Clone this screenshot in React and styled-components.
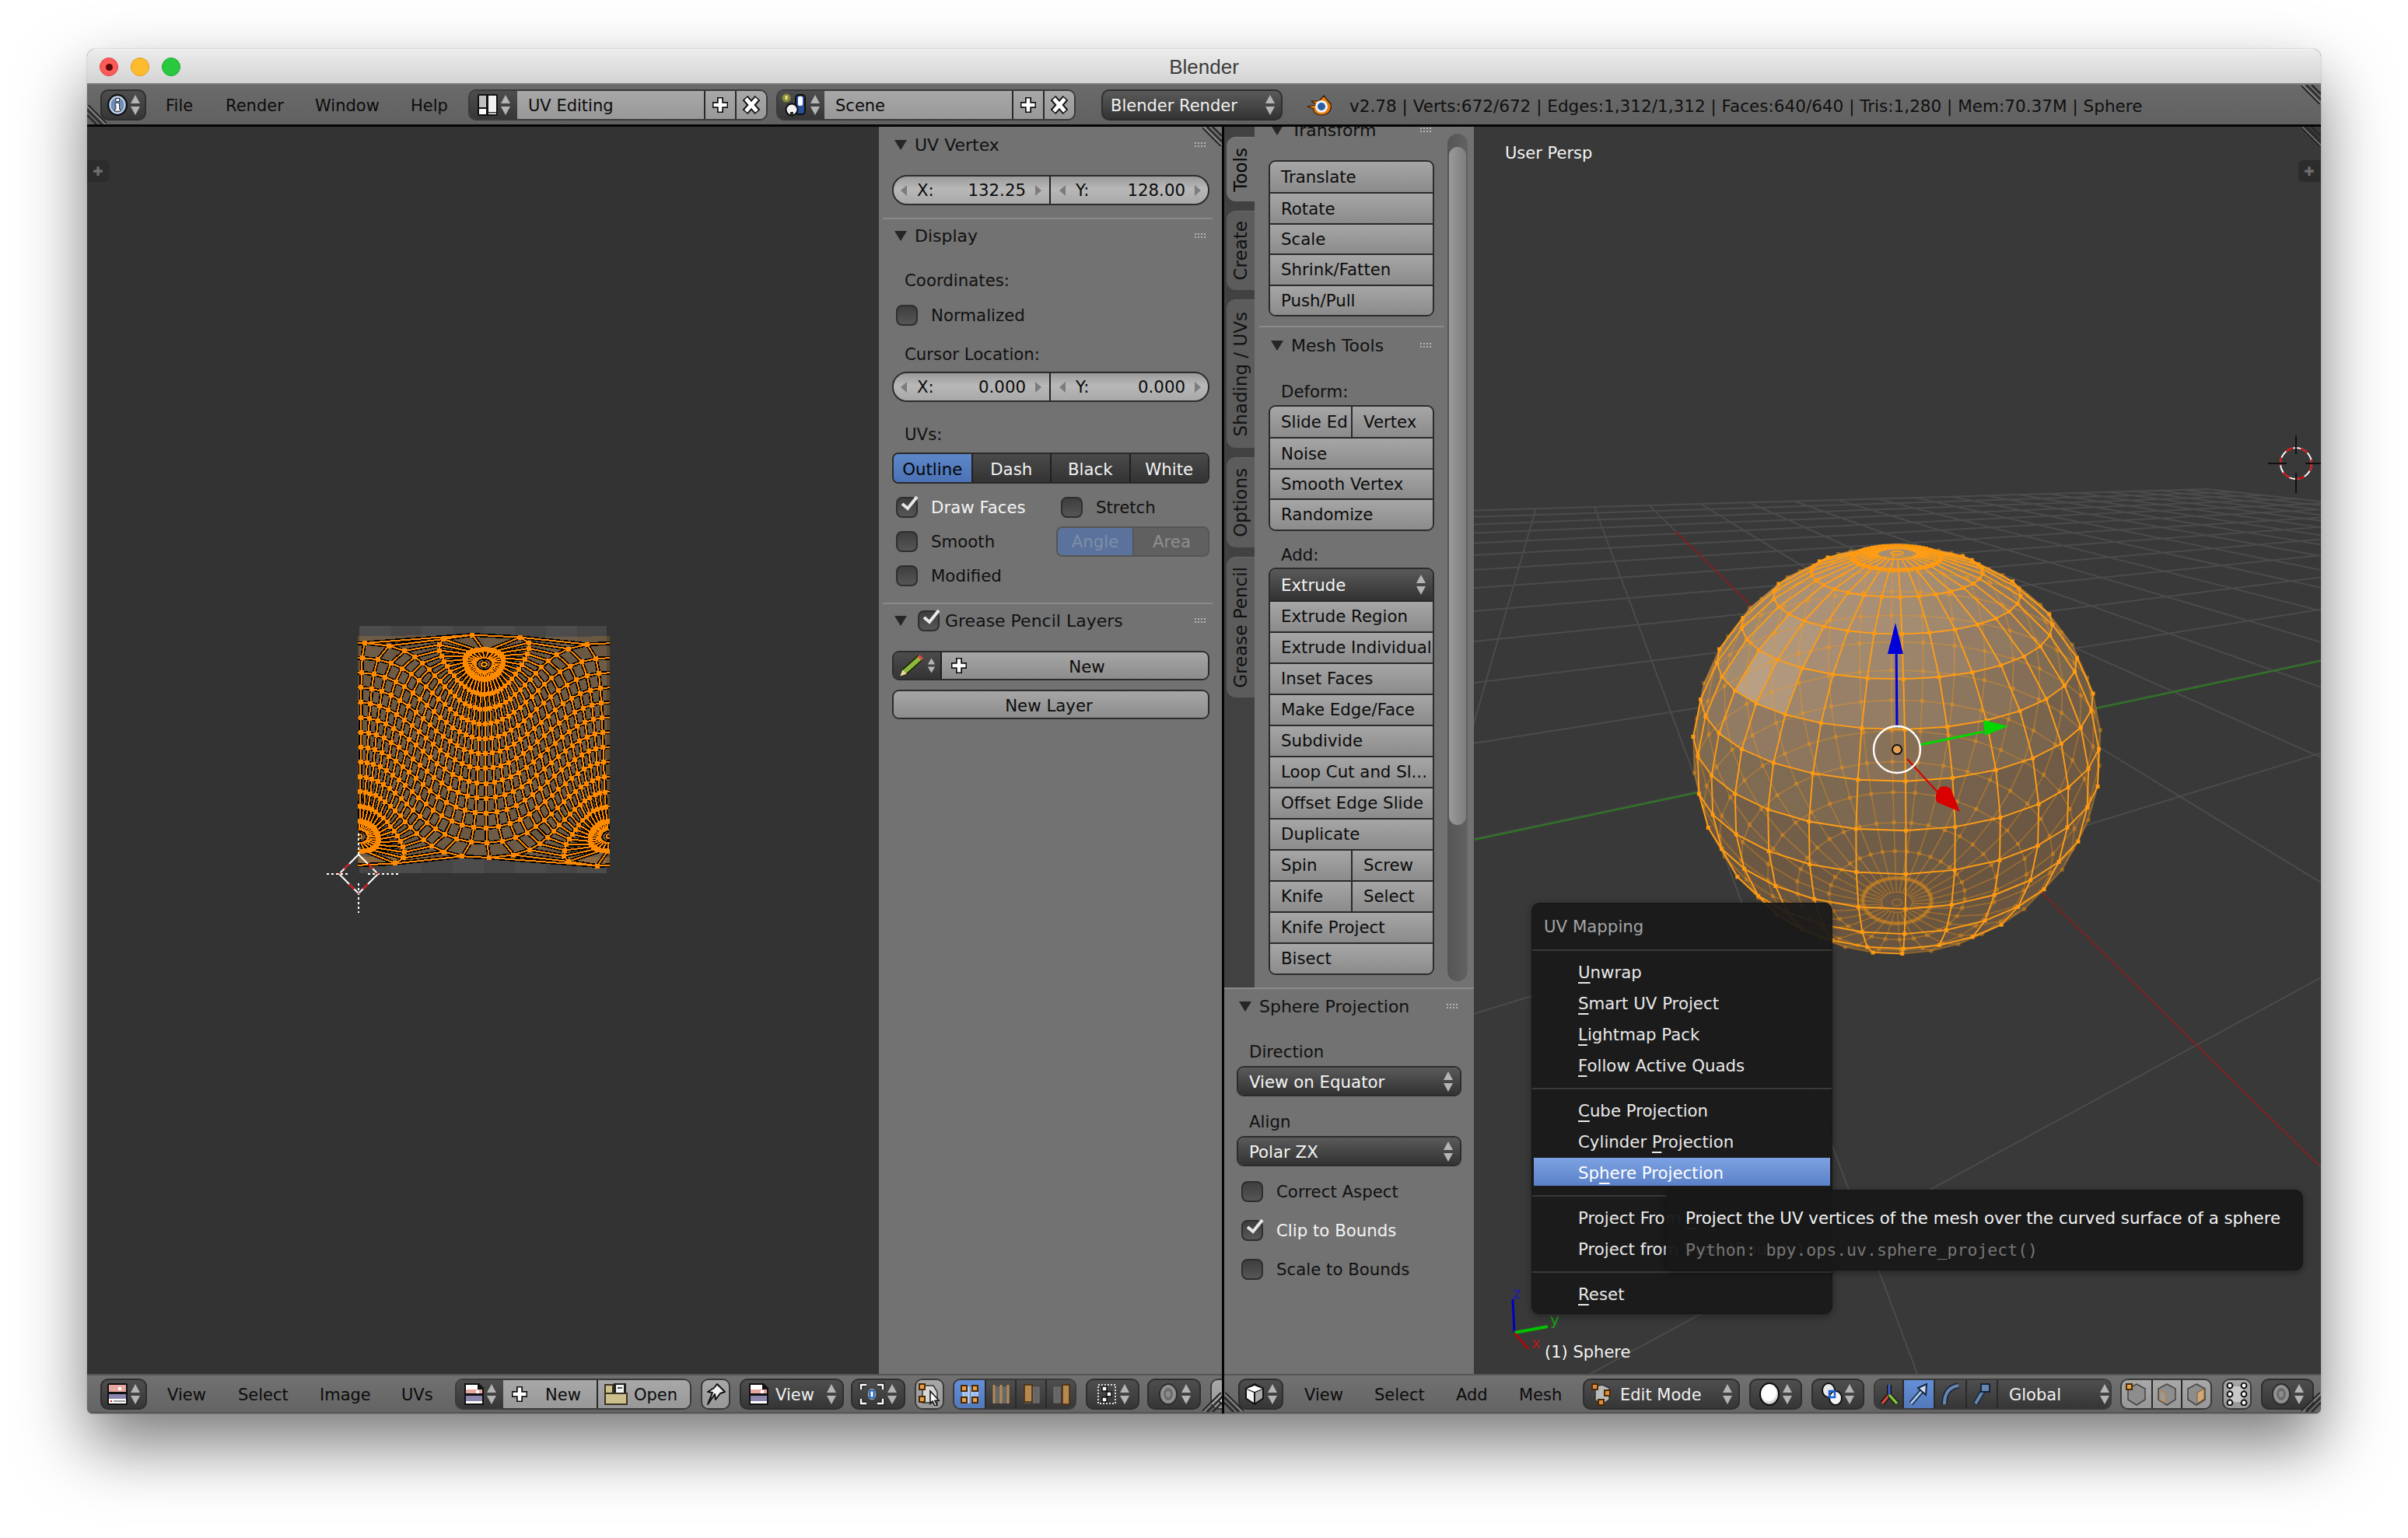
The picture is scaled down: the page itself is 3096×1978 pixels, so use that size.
import React from "react";
import styled, { createGlobalStyle } from "styled-components";

// ---- mesh and projection helpers for the two viewports ----

const rad = (d) => (d * Math.PI) / 180;
const unit = (colat, seg) => {
  const t = rad(colat);
  const p = (seg / 32) * Math.PI * 2 + rad(2);
  return [Math.sin(t) * Math.cos(p), Math.sin(t) * Math.sin(p), Math.cos(t)];
};

function buildMesh() {
  const faces = [];
  const edges = [];
  const verts = [];
  const rings = [];
  for (let k = 1; k <= 15; k++) rings.push(11.25 * k);
  rings.forEach((ring, r) => {
    for (let s = 0; s < 32; s++) {
      const a = unit(ring, s);
      const b = unit(ring, s + 1);
      verts.push(a);
      edges.push([a, b]);
      if (r < rings.length - 1) {
        const c = unit(rings[r + 1], s + 1);
        const d = unit(rings[r + 1], s);
        edges.push([a, d]);
        faces.push([a, b, c, d]);
      }
    }
  });
  // pole caps: dense outer ring, spokes that stop short, a tiny ring at the pole
  [
    [11.25, 5, 1.6],
    [168.75, 175, 178.4],
  ].forEach(([outer, inner, tiny]) => {
    const disc = [];
    for (let s = 0; s < 32; s++) {
      const i0 = unit(inner, s);
      const i1 = unit(inner, s + 1);
      const o0 = unit(outer, s);
      const o1 = unit(outer, s + 1);
      disc.push(i0);
      verts.push(unit(outer, s + 0.5));
      edges.push([i0, o0], [i0, i1], [unit(tiny, s), unit(tiny, s + 1)]);
      faces.push([i0, i1, o1, o0]);
    }
    faces.push(disc);
  });
  return { faces, edges, verts };
}

const mesh = buildMesh();

// 3D view camera
const TILT = rad(29.4);
const CAM = 3.92;
const view3 = ([fx, sx, up]) => {
  const z = up * Math.sin(TILT) + fx * Math.cos(TILT);
  const y = up * Math.cos(TILT) - fx * Math.sin(TILT);
  const f = CAM / (CAM - z);
  return { x: 2439 + 254 * sx * f, y: 964 - 254 * y * f, nx: sx, ny: y, nz: z };
};
const isFront = (p) => p.nz > 1 / CAM;

const lerp = (a, b, t) => a + (b - a) * t;
function faceColor(pts) {
  const n = pts.reduce(
    (acc, p) => [acc[0] + p.nx, acc[1] + p.ny, acc[2] + p.nz],
    [0, 0, 0]
  );
  const len = Math.hypot(n[0], n[1], n[2]);
  const d = Math.max(0, (n[0] * -0.2 + n[1] * 0.7 + n[2] * 0.68) / len);
  const h = Math.max(0, (n[0] * -0.53 + n[1] * 0.32 + n[2] * 0.78) / len);
  const t = Math.min(1, d * d * 0.75 + Math.pow(h, 60) * 0.5);
  return `rgb(${lerp(106, 200, t) | 0},${lerp(86, 172, t) | 0},${lerp(64, 142, t) | 0})`;
}

const sphereFaces = mesh.faces
  .map((f) => f.map(view3))
  .filter((pts) => pts.reduce((s, p) => s + p.nz, 0) / pts.length > 1 / CAM)
  .map((pts) => ({
    points: pts.map((p) => `${p.x.toFixed(1)},${p.y.toFixed(1)}`).join(" "),
    fill: faceColor(pts),
  }));

let frontEdges = "";
let backEdges = "";
mesh.edges.forEach(([a, b]) => {
  const p = view3(a);
  const q = view3(b);
  const seg = `M${p.x.toFixed(1)} ${p.y.toFixed(1)}L${q.x.toFixed(1)} ${q.y.toFixed(1)}`;
  if (isFront(p) && isFront(q)) frontEdges += seg;
  else backEdges += seg;
});
let frontVerts = "";
let backVerts = "";
mesh.verts.forEach((v) => {
  const p = view3(v);
  const sq = `M${(p.x - 2.5).toFixed(1)} ${(p.y - 2.5).toFixed(1)}h5v5h-5z`;
  if (isFront(p)) frontVerts += sq;
  else backVerts += sq;
});

// UV layout: sphere projection around an axis tilted from the mesh pole
const UV_TILT = rad(25);
const uvOf = ([x, y, z]) => {
  const x2 = x * Math.cos(UV_TILT) + z * Math.sin(UV_TILT);
  const z2 = -x * Math.sin(UV_TILT) + z * Math.cos(UV_TILT);
  return {
    u: 0.5 + Math.atan2(y, x2) / (Math.PI * 2),
    v: 0.5 + Math.asin(Math.max(-1, Math.min(1, z2))) / Math.PI,
  };
};
const uvX = (u) => 462 + u * 321;
const uvY = (v) => 1118 - v * 306;

let uvEdges = "";
let uvVerts = "";
const uvFaces = [];
mesh.edges.forEach(([a, b]) => {
  const p = uvOf(a);
  const q = uvOf(b);
  let qu = q.u;
  let pu = p.u;
  if (Math.abs(pu - qu) > 0.5) {
    if (pu < qu) pu += 1;
    else qu += 1;
    uvEdges += `M${uvX(pu - 1).toFixed(1)} ${uvY(p.v).toFixed(1)}L${uvX(qu - 1).toFixed(1)} ${uvY(q.v).toFixed(1)}`;
  }
  uvEdges += `M${uvX(pu).toFixed(1)} ${uvY(p.v).toFixed(1)}L${uvX(qu).toFixed(1)} ${uvY(q.v).toFixed(1)}`;
});
mesh.verts.forEach((v) => {
  const p = uvOf(v);
  uvVerts += `M${(uvX(p.u) - 3).toFixed(1)} ${(uvY(p.v) - 3).toFixed(1)}h6v6h-6z`;
});
mesh.faces.forEach((f) => {
  const pts = f.map(uvOf);
  const us = pts.map((p) => p.u);
  const wrap = Math.max(...us) - Math.min(...us) > 0.5;
  const str = (shift) =>
    pts
      .map((p) => {
        const u = wrap && p.u < 0.5 ? p.u + 1 : p.u;
        return `${uvX(u + shift).toFixed(1)},${uvY(p.v).toFixed(1)}`;
      })
      .join(" ");
  uvFaces.push(str(0));
  if (wrap) uvFaces.push(str(-1));
});

// floor grid, as a homography between the two vanishing points
const ORIGIN = [2439, 964];
const VP_RED = [2008, 539];
const VP_GREEN = [4216, 589];
const A = 0.236;
const B = 0.0623;
const floorPt = (u, v) => {
  const w = 1 + A * u + B * v;
  return [
    (ORIGIN[0] + A * u * VP_RED[0] + B * v * VP_GREEN[0]) / w,
    (ORIGIN[1] + A * u * VP_RED[1] + B * v * VP_GREEN[1]) / w,
  ];
};
let gridPath = "";
const U_MIN = -6;
const U_MAX = 12;
const V_MIN = -12;
const V_MAX = 32;
for (let u = U_MIN; u <= U_MAX; u += 1) {
  const lo = Math.max(V_MIN, (0.04 - 1 - A * u) / B);
  if (lo >= V_MAX) continue;
  const p = floorPt(u, lo);
  const q = floorPt(u, V_MAX);
  gridPath += `M${p[0].toFixed(1)} ${p[1].toFixed(1)}L${q[0].toFixed(1)} ${q[1].toFixed(1)}`;
}
for (let v = V_MIN; v <= V_MAX; v += 2) {
  const lo = Math.max(U_MIN, (0.04 - 1 - B * v) / A);
  if (lo >= U_MAX) continue;
  const p = floorPt(lo, v);
  const q = floorPt(U_MAX, v);
  gridPath += `M${p[0].toFixed(1)} ${p[1].toFixed(1)}L${q[0].toFixed(1)} ${q[1].toFixed(1)}`;
}

// ---- styles ----

const GlobalStyle = createGlobalStyle`
  html, body {
    margin: 0;
    background: #fff;
    width: 3096px;
    height: 1978px;
    overflow: hidden;
    font-family: "DejaVu Sans", sans-serif;
  }
`;

const Page = styled.div`
  width: 3096px;
  height: 1978px;
  padding: 63px 0 0 112px;
  box-sizing: border-box;
`;

const Window = styled.div`
  width: 2872px;
  height: 1755px;
  display: flex;
  flex-direction: column;
  overflow: hidden;
  border-radius: 10px 10px 7px 7px;
  box-shadow: 0 40px 85px rgba(0, 0, 0, 0.52), 0 0 2px rgba(0, 0, 0, 0.3);
  background: #666;
`;

const TitleBar = styled.div`
  height: 44px;
  flex: none;
  position: relative;
  display: flex;
  align-items: center;
  justify-content: center;
  padding-top: 2px;
  background: linear-gradient(#ececec, #d3d3d3);
  color: #3c3c3c;
  font: 26px "Liberation Sans", sans-serif;
  border-top: 1px solid #f6f6f6;
  box-sizing: border-box;
`;

const Lights = styled.div`
  position: absolute;
  left: 16px;
  top: 10px;
  display: flex;
  gap: 16px;
`;

const Light = styled.span`
  width: 24px;
  height: 24px;
  border-radius: 50%;
  background: ${(p) => p.$c};
  border: 1px solid ${(p) => p.$b};
  box-sizing: border-box;
  display: flex;
  align-items: center;
  justify-content: center;
`;

const LightDot = styled.span`
  width: 9px;
  height: 9px;
  border-radius: 50%;
  background: #5a0a08;
`;

const TopBar = styled.div`
  height: 56px;
  flex: none;
  display: flex;
  align-items: center;
  position: relative;
  padding: 0 0 0 17px;
  box-sizing: border-box;
  background: linear-gradient(#6a6a6a, #616161);
  border-top: 2px solid #7a7a7a;
  border-bottom: 3px solid #050505;
  font-size: 21px;
`;

const BottomBar = styled.div`
  height: 51px;
  flex: none;
  display: flex;
  align-items: center;
  position: relative;
  overflow: hidden;
  padding-left: ${(p) => p.$pad}px;
  box-sizing: border-box;
  background: linear-gradient(#717171, #646464);
  border-top: 2px solid #565656;
  border-bottom: 2px solid #555;
  font-size: 21px;
`;

const MenuLink = styled.span`
  flex: none;
  width: ${(p) => p.$w}px;
  margin-left: ${(p) => p.$ml || 0}px;
  padding-top: 3px;
  color: #0c0c0c;
`;

const Main = styled.div`
  flex: 1;
  min-height: 0;
  display: flex;
`;

const Side = styled.div`
  width: ${(p) => p.$w}px;
  flex: none;
  display: flex;
  flex-direction: column;
`;

const VDivider = styled.div`
  width: 3px;
  flex: none;
  background: #050505;
`;

const Views = styled.div`
  flex: 1;
  min-height: 0;
  display: flex;
`;

const Viewport = styled.div`
  flex: 1;
  min-width: 0;
  position: relative;
  overflow: hidden;
  background: ${(p) => p.$bg};
`;

const Canvas = styled.svg`
  position: absolute;
  left: 0;
  top: 0;
  width: 100%;
  height: 100%;
`;

const AddTab = styled.div`
  position: absolute;
  top: 43px;
  ${(p) => (p.$right ? "right: 1px;" : "left: 0;")}
  width: 28px;
  height: 28px;
  border-radius: ${(p) => (p.$right ? "6px 0 0 6px" : "0 6px 6px 0")};
  background: #2c2c2c;
  display: flex;
  align-items: center;
  justify-content: center;
  color: #6f6f6f;
`;

const ViewLabel = styled.div`
  position: absolute;
  left: ${(p) => p.$x}px;
  top: ${(p) => p.$y}px;
  color: #f2f2f2;
  font-size: 21px;
  line-height: 28px;
`;

const AxisLabel = styled.div`
  position: absolute;
  left: ${(p) => p.$x}px;
  top: ${(p) => p.$y}px;
  color: ${(p) => p.$c};
  font-size: 20px;
  line-height: 24px;
`;

const CornerMark = styled.svg`
  position: absolute;
  width: 25px;
  height: 25px;
  ${(p) =>
    p.$at === "tr"
      ? "top: 0; right: 0;"
      : p.$at === "bl"
      ? "bottom: 0; left: 0; transform: rotate(180deg);"
      : "bottom: 0; right: 0; transform: scaleY(-1);"}
`;

const ToolBox = styled.div`
  width: 321px;
  flex: none;
  display: flex;
  flex-direction: column;
`;

const ToolRegion = styled.div`
  height: 1107px;
  flex: none;
  display: flex;
  overflow: hidden;
  background: #727272;
`;

const TabColumn = styled.div`
  width: 39px;
  flex: none;
  padding: 13px 0 0 3px;
  box-sizing: border-box;
  background: #414141;
  display: flex;
  flex-direction: column;
  gap: 12px;
`;

const Tab = styled.div`
  width: 36px;
  height: ${(p) => p.$h}px;
  flex: none;
  border-radius: 12px 0 0 12px;
  background: ${(p) => (p.$active ? "#727272" : "#5c5c5c")};
  border-top: 1px solid ${(p) => (p.$active ? "#808080" : "#666")};
  box-sizing: border-box;
  display: flex;
  align-items: center;
  justify-content: center;
  color: ${(p) => (p.$active ? "#050505" : "#111")};
`;

const TabText = styled.span`
  writing-mode: vertical-rl;
  transform: rotate(180deg);
  font-size: 23px;
  line-height: 30px;
  white-space: nowrap;
`;

const ToolScroll = styled.div`
  width: 213px;
  margin: -16px 0 0 18px;
  flex: none;
`;

const Scrollbar = styled.div`
  width: 26px;
  height: 1090px;
  margin: 9px 0 0 17px;
  padding: 17px 2px 0;
  box-sizing: border-box;
  flex: none;
  border-radius: 13px;
  background: linear-gradient(90deg, #555, #626262);
`;

const Thumb = styled.div`
  height: 872px;
  border-radius: 11px;
  background: linear-gradient(90deg, #9a9a9a, #7e7e7e);
`;

const Panel = styled.div`
  flex: 1;
  min-height: 0;
  background: #727272;
  padding: 0 ${(p) => p.$r}px 0 ${(p) => p.$l}px;
  box-sizing: border-box;
  position: relative;
`;

const PanelHead = styled.div`
  height: 40px;
  margin-top: ${(p) => p.$mt || 0}px;
  display: flex;
  align-items: center;
  color: #111;
  font-size: 22px;
  padding-left: ${(p) => p.$indent}px;
  padding-right: ${(p) => p.$gr}px;
`;

const Tri = styled.span`
  width: 0;
  height: 0;
  flex: none;
  border-left: 8px solid transparent;
  border-right: 8px solid transparent;
  border-top: 13px solid #262626;
  margin-right: ${(p) => p.$mr}px;
`;

const Grip = styled.span`
  width: 15px;
  height: 9px;
  margin-left: auto;
  flex: none;
  background-image: radial-gradient(#b4b4b4 1px, transparent 1.2px);
  background-size: 4px 4px;
`;

const PanelRule = styled.div`
  height: 2px;
  margin: ${(p) => p.$mt}px ${(p) => p.$mr || 0}px 0 ${(p) => p.$ml || 0}px;
  background: #8a8a8a;
`;

const Caption = styled.div`
  height: 28px;
  line-height: 28px;
  margin-top: ${(p) => p.$mt}px;
  padding-left: ${(p) => p.$pad}px;
  font-size: 21.3px;
  color: #111;
`;

const FieldRow = styled.div`
  height: 39px;
  margin-top: ${(p) => p.$mt}px;
  display: flex;
  box-sizing: border-box;
  border: 2px solid #2c2c2c;
  border-radius: 19px;
  overflow: hidden;
  background: linear-gradient(#9a9a9a, #b8b8b8 45%, #a8a8a8);
  font-size: 21.3px;
  color: #0c0c0c;
`;

const NumCell = styled.div`
  width: ${(p) => p.$w}px;
  flex: none;
  display: flex;
  align-items: center;
  padding: 0 ${(p) => p.$rp}px 0 ${(p) => p.$lp}px;
  box-sizing: border-box;
  border-left: ${(p) => (p.$split ? "2px solid #222" : "none")};
`;

const Nudge = styled.span`
  width: 0;
  height: 0;
  flex: none;
  border-top: 7px solid transparent;
  border-bottom: 7px solid transparent;
  ${(p) =>
    p.$dir === "l"
      ? "border-right: 8px solid #7c7c7c; margin-right: 13px;"
      : "border-left: 8px solid #7c7c7c; margin-left: 12px;"}
`;

const CellValue = styled.span`
  margin-left: auto;
`;

const Radio = styled.div`
  height: 40px;
  margin-top: ${(p) => p.$mt}px;
  display: flex;
  box-sizing: border-box;
  border: 2px solid #2a2a2a;
  border-radius: 8px;
  overflow: hidden;
  font-size: 21.3px;
`;

const RadioCell = styled.div`
  flex: 1;
  display: flex;
  align-items: center;
  justify-content: center;
  padding-top: 2px;
  color: ${(p) => (p.$on ? "#050505" : "#f2f2f2")};
  background: ${(p) =>
    p.$on ? "linear-gradient(#5e87c9, #4a72b5)" : "linear-gradient(#4a4a4a, #333)"};
  border-left: ${(p) => (p.$first ? "none" : "2px solid #1f1f1f")};
`;

const CheckGrid = styled.div`
  margin-top: 8px;
  display: grid;
  grid-template-columns: 211px 197px;
  grid-auto-rows: 44px;
  align-items: center;
`;

const CheckRow = styled.div`
  height: ${(p) => p.$h || 44}px;
  margin-top: ${(p) => p.$mt || 0}px;
  display: flex;
  align-items: center;
  gap: 17px;
  padding-left: ${(p) => p.$pad}px;
  font-size: 21.3px;
  color: ${(p) => (p.$on ? "#f4f4f4" : "#111")};
`;

const Box = styled.span`
  width: 28px;
  height: 27px;
  flex: none;
  position: relative;
  box-sizing: border-box;
  border: 2px solid #2e2e2e;
  border-radius: 8px;
  margin-right: ${(p) => p.$mr || 0}px;
  background: linear-gradient(#3e3e3e, #565656);
`;

const Tick = styled.svg`
  position: absolute;
  left: 2px;
  top: -6px;
  width: 26px;
  height: 24px;
`;

const ModeSwitch = styled.div`
  height: 39px;
  display: flex;
  box-sizing: border-box;
  border: 2px solid #555;
  border-radius: 8px;
  overflow: hidden;
  font-size: 21.3px;
`;

const ModeCell = styled.div`
  width: ${(p) => p.$w}px;
  flex: none;
  display: flex;
  align-items: center;
  justify-content: center;
  color: ${(p) => (p.$on ? "#7f8ea8" : "#8f8f8f")};
  background: ${(p) => (p.$on ? "#5a729c" : "#606060")};
  border-left: ${(p) => (p.$on ? "none" : "2px solid #555")};
`;

const PencilRow = styled.div`
  height: 38px;
  margin-top: ${(p) => p.$mt}px;
  display: flex;
  box-sizing: border-box;
  border: 2px solid #2c2c2c;
  border-radius: 9px;
  overflow: hidden;
  font-size: 21.3px;
`;

const PencilPick = styled.div`
  width: 62px;
  flex: none;
  display: flex;
  align-items: center;
  gap: 3px;
  padding-left: 6px;
  box-sizing: border-box;
  background: linear-gradient(#4c4c4c, #343434);
  border-right: 2px solid #1f1f1f;
`;

const LightButton = styled.div`
  flex: 1;
  display: flex;
  align-items: center;
  padding-left: 9px;
  color: #0c0c0c;
  background: linear-gradient(#a6a6a6, #8c8c8c);
`;

const ButtonLabel = styled.span`
  flex: 1;
  text-align: center;
  padding-top: 2px;
  padding-right: ${(p) => p.$rp || 0}px;
`;

const StackGroup = styled.div`
  margin-top: ${(p) => p.$mt}px;
  border: 2px solid #2c2c2c;
  border-radius: 9px;
  overflow: hidden;
  font-size: 21.3px;
`;

const StackRow = styled.div`
  height: ${(p) => p.$h || 40}px;
  box-sizing: border-box;
  display: flex;
  color: #0c0c0c;
  border-top: ${(p) => (p.$first ? "none" : "2px solid #2a2a2a")};
  background: linear-gradient(#a6a6a6, #8b8b8b);
`;

const DarkRow = styled(StackRow)`
  color: #f4f4f4;
  background: linear-gradient(#5a5a5a, #323232);
  align-items: center;
  justify-content: space-between;
  padding: 0 8px 0 14px;
`;

const DarkText = styled.span`
  padding-top: 2px;
`;

const StackCell = styled.div`
  flex: ${(p) => (p.$w ? `none` : 1)};
  width: ${(p) => (p.$w ? `${p.$w}px` : "auto")};
  padding-left: 14px;
  display: flex;
  align-items: center;
  box-sizing: border-box;
  border-left: ${(p) => (p.$split ? "2px solid #2a2a2a" : "none")};
  white-space: nowrap;
  overflow: hidden;
`;

const Drop = styled.div`
  width: ${(p) => p.$w}px;
  height: 40px;
  margin-left: ${(p) => p.$ml || 0}px;
  flex: none;
  display: flex;
  align-items: center;
  justify-content: ${(p) => (p.$text ? "flex-start" : "center")};
  gap: ${(p) => (p.$text ? 0 : 2)}px;
  padding: 0 ${(p) => (p.$text ? 7 : 2)}px 0 ${(p) => (p.$text ? p.$text : 2)}px;
  box-sizing: border-box;
  border: 2px solid #2e2e2e;
  border-radius: 10px;
  background: ${(p) =>
    p.$tone === "menu" ? "linear-gradient(#5a5a5a, #333)" : "linear-gradient(#4e4e4e, #363636)"};
  color: #f0f0f0;
`;

const DropText = styled.span`
  flex: 1;
  padding-top: 3px;
  margin-left: ${(p) => p.$ml || 0}px;
`;

const Seg = styled.div`
  margin-left: ${(p) => p.$ml || 0}px;
  height: 40px;
  flex: none;
  display: flex;
  box-sizing: border-box;
  border: 2px solid #3a3a3a;
  border-radius: 10px;
  overflow: hidden;
`;

const SegCell = styled.div`
  width: ${(p) => p.$w}px;
  flex: none;
  display: flex;
  align-items: center;
  gap: ${(p) => (p.$gap === undefined ? 2 : p.$gap)}px;
  justify-content: ${(p) => (p.$text ? "flex-start" : "center")};
  padding-left: ${(p) => p.$text || 0}px;
  box-sizing: border-box;
  color: ${(p) => (p.$tone === "dark" ? "#f0f0f0" : "#0c0c0c")};
  border-left: ${(p) => (p.$first ? "none" : "2px solid #2a2a2a")};
  background: ${(p) =>
    p.$tone === "dark"
      ? "linear-gradient(#4e4e4e, #363636)"
      : p.$tone === "blue"
      ? "linear-gradient(#6490d8, #5378ba)"
      : "linear-gradient(#a8a8a8, #989898)"};
`;

const SegText = styled.span`
  padding-top: 3px;
  flex: ${(p) => (p.$grow ? 1 : "none")};
`;

const Info = styled.span`
  margin-left: 22px;
  padding-top: 3px;
  font-size: 21.55px;
  color: #101010;
  white-space: nowrap;
`;

const Overlay = styled.div`
  position: absolute;
  left: ${(p) => p.$x}px;
  top: ${(p) => p.$y}px;
  box-sizing: border-box;
  border-radius: 10px;
  border: 1px solid #161616;
  background: ${(p) => p.$bg};
  box-shadow: 0 3px 10px rgba(0, 0, 0, 0.35);
  font-size: 21.3px;
`;

const PopupMenu = styled(Overlay)`
  width: 387px;
  height: 529px;
  overflow: hidden;
  color: #e8e8e8;
`;

const MenuTitle = styled.div`
  height: 58px;
  padding-left: 15px;
  display: flex;
  align-items: center;
  color: #a4a4a4;
`;

const MenuRule = styled.div`
  height: 2px;
  margin: ${(p) => p.$mt || 8}px 0 8px;
  background: #3a3a3a;
`;

const MenuRow = styled.div`
  height: 40px;
  line-height: 39px;
  margin: 0 2px;
  padding-left: 57px;
  white-space: nowrap;
  color: ${(p) => (p.$on ? "#fff" : "#e8e8e8")};
  background: ${(p) =>
    p.$on ? "linear-gradient(#7da2e2, #5a80c8) no-repeat 0 0 / 100% 36px" : "none"};

  u {
    text-underline-offset: 5px;
    text-decoration-thickness: 2px;
  }
`;

const TipBox = styled(Overlay)`
  width: 819px;
  height: 104px;
  padding: 15px 0 0 24px;
  color: #f0f0f0;
  white-space: nowrap;
`;

const TipLine = styled.div`
  height: 41px;
  line-height: 41px;
`;

const TipCode = styled(TipLine)`
  font-family: "DejaVu Sans Mono", monospace;
  font-size: 21.5px;
  color: #767676;
`;

// ---- icons ----

const Svg = ({ w = 28, h = 30, vb = "0 0 28 30", children }) => (
  <svg width={w} height={h} viewBox={vb} style={{ flex: "none", display: "block" }}>
    {children}
  </svg>
);

const UpDown = () => (
  <Svg w={14} h={30} vb="0 0 14 30">
    <path d="M7 2L13 13H1z" fill="#b4b4b4" />
    <path d="M7 28L13 17H1z" fill="#b4b4b4" />
  </Svg>
);

const IconInfo = () => (
  <Svg>
    <ellipse cx="14" cy="15" rx="12" ry="13" fill="#6d8db8" stroke="#0c0c0c" strokeWidth="2" />
    <ellipse cx="14" cy="15" rx="9.5" ry="10.5" fill="none" stroke="#d5dfec" strokeWidth="1.5" />
    <rect x="12" y="6.5" width="4.5" height="4" fill="#fff" stroke="#111" strokeWidth=".8" />
    <path d="M11 12.5h5.5v8H18v2.5H10.5v-2.5h1.5v-5.5h-1z" fill="#fff" stroke="#111" strokeWidth=".8" />
  </Svg>
);

const IconLayout = () => (
  <Svg>
    <rect x="1" y="1" width="26" height="28" rx="2" fill="#111" />
    <rect x="3" y="3" width="9" height="15" fill="#bfbfbf" />
    <rect x="3" y="20" width="9" height="7" fill="#fafafa" />
    <rect x="15" y="3" width="10" height="24" fill="#f2f2f2" />
    <rect x="15" y="24" width="10" height="1.5" fill="#333" />
  </Svg>
);

const IconScene = () => (
  <Svg w={34} vb="0 0 34 30">
    <circle cx="6" cy="6" r="5.5" fill="#8b8b3a" />
    <rect x="4.5" y="3" width="3" height="5" fill="#e8e88a" />
    <rect x="18" y="2" width="12" height="25" rx="4" fill="#2a4f9c" stroke="#0c0c0c" strokeWidth="2" />
    <rect x="21" y="4" width="6" height="12" rx="2" fill="#fff" />
    <circle cx="13" cy="21" r="7.5" fill="#f2f2f2" stroke="#0c0c0c" strokeWidth="2" />
    <rect x="11" y="24" width="4" height="6" fill="#222" />
  </Svg>
);

const IconPlus = ({ c = "#fff" }) => (
  <Svg w={26} h={30} vb="0 0 26 30">
    <path d="M13 5v20M3 15h20" stroke="#111" strokeWidth="8" />
    <path d="M13 6.5v17M4.5 15h17" stroke={c} strokeWidth="4.5" />
  </Svg>
);

const IconClose = () => (
  <Svg w={26} h={30} vb="0 0 26 30">
    <path d="M5 6l16 18M21 6L5 24" stroke="#111" strokeWidth="9" />
    <path d="M6 7l14 16M20 7L6 23" stroke="#fff" strokeWidth="5" />
  </Svg>
);

const Picture = () => (
  <>
    <rect x="3" y="3" width="22" height="12" fill="#e7a7a0" />
    <rect x="15" y="6" width="4" height="4" fill="#fff" />
    <rect x="3" y="12" width="22" height="3" fill="#111" />
    <rect x="3" y="15" width="22" height="6" fill="#8a86ad" />
    <rect x="3" y="21" width="22" height="6" fill="#fff" />
  </>
);

const IconEditor = () => (
  <Svg>
    <rect x="1" y="1" width="26" height="28" rx="2" fill="#111" />
    <Picture />
    <rect x="5" y="23" width="2" height="2" fill="#e01010" />
    <rect x="9" y="23" width="15" height="2" fill="#999" />
  </Svg>
);

const IconImage = () => (
  <Svg>
    <path d="M2 1h19l6 6v22H2z" fill="#111" />
    <path d="M4 3h15v6h6v18H4z" fill="#fff" />
    <rect x="4" y="9" width="21" height="6" fill="#e7a7a0" />
    <rect x="17" y="10" width="4" height="4" fill="#fff" />
    <rect x="4" y="14" width="21" height="3" fill="#111" />
    <rect x="4" y="17" width="21" height="7" fill="#8a86ad" />
  </Svg>
);

const IconFolder = () => (
  <Svg w={34} vb="0 0 34 30">
    <rect x="2" y="2" width="12" height="26" fill="#3a3424" />
    <rect x="4" y="4" width="8" height="10" fill="#cdc08c" />
    <rect x="14" y="1" width="16" height="15" fill="#222" />
    <rect x="17" y="3" width="10" height="11" fill="#f2f2f2" />
    <rect x="19" y="6" width="6" height="2" fill="#555" />
    <rect x="2" y="13" width="30" height="16" fill="#3a3424" />
    <rect x="4" y="15" width="26" height="12" fill="#cdbf8b" />
  </Svg>
);

const IconPin = () => (
  <Svg>
    <path d="M16 2l10 10-6 2-6 8-1-7-9 13 6-15-6-1 8-5z" fill="#f0f0f0" stroke="#111" strokeWidth="2" strokeLinejoin="round" />
  </Svg>
);

const IconPivot = () => (
  <Svg w={34} vb="0 0 34 30">
    <path d="M3 9V3h7M24 3h7v6M31 21v6h-7M10 27H3v-6" fill="none" stroke="#111" strokeWidth="5" />
    <path d="M3 9V3h7M24 3h7v6M31 21v6h-7M10 27H3v-6" fill="none" stroke="#fff" strokeWidth="2.5" />
    <ellipse cx="17" cy="15" rx="6" ry="8" fill="#9a9a9a" stroke="#333" strokeWidth="1" />
    <rect x="14.5" y="10.5" width="5" height="9" fill="#fff" stroke="#1a62c8" strokeWidth="2" />
  </Svg>
);

const Handle = ({ x, y }) => <rect x={x} y={y} width="7" height="7" fill="#e8a24a" stroke="#4c2a06" strokeWidth="2" />;

const IconCursorSel = () => (
  <Svg>
    <path d="M5 4h14l5 8v14H5z" fill="#d6d6d6" stroke="#333" strokeWidth="1.5" />
    <Handle x={1} y={2} />
    <Handle x={1} y={18} />
    <path d="M15 11l11 12-5 .5 3 5.5-3 1-3-6-3 3z" fill="#fff" stroke="#111" strokeWidth="1.6" />
  </Svg>
);

const IconUvMode = ({ kind }) => {
  const frame = kind === "vert" ? "#dfe8f5" : "#777";
  return (
    <Svg>
      <rect x="5" y="6" width="8" height="20" fill={kind === "vert" ? "#9cc0ea" : "#666"} stroke={frame} strokeWidth="1" />
      <rect x="16" y="6" width="8" height="20" fill={kind === "island" ? "#c49a62" : kind === "vert" ? "#9cc0ea" : "#666"} stroke={frame} strokeWidth="1" />
      {kind === "face" && <rect x="5" y="3" width="10" height="22" fill="#b58a52" stroke="#4c2a06" strokeWidth="1.5" />}
      {kind === "island" && <rect x="16" y="3" width="9" height="25" fill="#b58a52" stroke="#4c2a06" strokeWidth="1.5" />}
      {kind === "edge" && <path d="M5 3v24M14 3v24M23 3v24" stroke="#b58a52" strokeWidth="3" />}
      {kind === "vert" && (
        <>
          <Handle x={3} y={4} />
          <Handle x={17} y={4} />
          <Handle x={3} y={19} />
          <Handle x={17} y={19} />
        </>
      )}
    </Svg>
  );
};

const IconSticky = () => (
  <Svg>
    <rect x="3" y="3" width="22" height="24" fill="none" stroke="#ddd" strokeWidth="2" strokeDasharray="2 2" />
    <path d="M11 8l6 7-6 7" fill="none" stroke="#111" strokeWidth="3" />
    <rect x="8" y="5" width="6" height="6" fill="#fff" stroke="#111" strokeWidth="1.5" />
    <rect x="14" y="12" width="6" height="6" fill="#fff" stroke="#111" strokeWidth="1.5" />
    <rect x="8" y="19" width="6" height="6" fill="#fff" stroke="#111" strokeWidth="1.5" />
  </Svg>
);

const IconProp = () => (
  <Svg>
    <ellipse cx="14" cy="15" rx="11" ry="13" fill="#8a8a8a" stroke="#222" strokeWidth="1.5" />
    <ellipse cx="14" cy="15" rx="7" ry="9" fill="#6c6c6c" stroke="#9b9b9b" strokeWidth="1.5" />
    <ellipse cx="14" cy="15" rx="3" ry="4" fill="#8c8c8c" />
  </Svg>
);

const IconPartial = () => (
  <Svg w={28} vb="0 0 28 30">
    <path d="M6 24l13-19 5 4-13 19z" fill="#e6e6e6" stroke="#222" strokeWidth="2" />
  </Svg>
);

const IconMeshCube = () => (
  <Svg>
    <path d="M14 1l12 6v14l-12 8-12-8V7z" fill="#111" />
    <path d="M4 8l10-4 10 4-10 4z" fill="#fff" />
    <path d="M4 9l9 4v13l-9-6z" fill="#f2f2f2" />
    <path d="M24 9l-9 4v13l9-6z" fill="#a8a8a8" />
  </Svg>
);

const IconEditMode = () => (
  <Svg>
    <path d="M6 5l9-2 9 4v15l-9 6-9-5z" fill="#b9b9b9" stroke="#333" strokeWidth="1.5" />
    <rect x="2" y="2" width="7" height="7" fill="#d88f3c" stroke="#4c2a06" strokeWidth="2" />
    <rect x="18" y="10" width="7" height="7" fill="#d88f3c" stroke="#4c2a06" strokeWidth="2" />
    <rect x="10" y="22" width="7" height="7" fill="#d88f3c" stroke="#4c2a06" strokeWidth="2" />
  </Svg>
);

const IconShading = () => (
  <Svg>
    <defs>
      <radialGradient id="shadeBall" cx=".45" cy=".4" r=".7">
        <stop offset=".55" stopColor="#fff" />
        <stop offset="1" stopColor="#8a8a8a" />
      </radialGradient>
    </defs>
    <ellipse cx="14" cy="15" rx="12" ry="14" fill="url(#shadeBall)" stroke="#0c0c0c" strokeWidth="2" />
  </Svg>
);

const IconPivotMedian = () => (
  <Svg>
    <ellipse cx="10" cy="10" rx="8" ry="9" fill="#e8e8e8" stroke="#111" strokeWidth="2" />
    <ellipse cx="19" cy="20" rx="8" ry="9" fill="#f4f4f4" stroke="#111" strokeWidth="2" />
    <rect x="11" y="11" width="7" height="8" fill="none" stroke="#1a62d8" strokeWidth="2.5" />
  </Svg>
);

const IconManip = () => (
  <Svg>
    <path d="M14 16V3" stroke="#111" strokeWidth="6" />
    <path d="M14 16V3" stroke="#3a64c8" strokeWidth="3" />
    <path d="M14 16L5 27" stroke="#111" strokeWidth="6" />
    <path d="M14 16L5 27" stroke="#d84a3a" strokeWidth="3.5" />
    <path d="M14 16l10 11" stroke="#111" strokeWidth="6" />
    <path d="M14 16l10 11" stroke="#7cc63a" strokeWidth="3.5" />
  </Svg>
);

const IconTranslate = () => (
  <Svg>
    <path d="M4 27L22 6" stroke="#14243c" strokeWidth="6" />
    <path d="M4 27L22 6" stroke="#a9c8ee" strokeWidth="3" />
    <path d="M24 2l-1 14-10-9z" fill="#cfe0f5" stroke="#14243c" strokeWidth="2" />
  </Svg>
);

const IconRotate = () => (
  <Svg>
    <path d="M6 28C6 16 10 6 24 4" fill="none" stroke="#14243c" strokeWidth="7" />
    <path d="M6 28C6 16 10 6 24 4" fill="none" stroke="#6786ad" strokeWidth="4" />
  </Svg>
);

const IconScale = () => (
  <Svg>
    <path d="M6 27L16 10" stroke="#14243c" strokeWidth="7" />
    <path d="M6 27L16 10" stroke="#6786ad" strokeWidth="4" />
    <rect x="13" y="2" width="11" height="10" fill="#6786ad" stroke="#14243c" strokeWidth="2" />
  </Svg>
);

const IconCube = ({ kind }) => (
  <Svg>
    <path d="M14 2l11 6v14l-11 7-11-7V8z" fill="#8d8d8d" stroke="#444" strokeWidth="1.5" />
    {kind === "edge" && <path d="M5 10l7 4v12l-7-4z" fill="#9b9b9b" stroke="#b58a52" strokeWidth="1.6" />}
    {kind === "face" && <path d="M15 13l9-5v13l-9 6z" fill="#d3a876" stroke="#7a5a30" strokeWidth="1" />}
    {kind === "vert" && <Handle x={1} y={2} />}
  </Svg>
);

const IconOcclude = () => (
  <Svg>
    <rect x="5" y="4" width="18" height="22" fill="#c8c8c8" stroke="#888" strokeWidth="1" />
    {[
      [5, 4],
      [23, 4],
      [5, 15],
      [23, 15],
      [5, 26],
      [23, 26],
    ].map(([x, y]) => (
      <circle key={`${x}-${y}`} cx={x} cy={y} r="3.4" fill="#fff" stroke="#0c0c0c" strokeWidth="2" />
    ))}
  </Svg>
);

const IconPencil = () => (
  <Svg w={34} h={32} vb="0 0 32 30">
    <path d="M2 28l3-8L24 3l5 5L10 25z" fill="#8fb83e" stroke="#1c2a08" strokeWidth="1.6" strokeLinejoin="round" />
    <path d="M2 28l3-8 5 5z" fill="#e8d8a8" />
    <path d="M23 4l3-2 4 4-2 3z" fill="#e04a4a" />
  </Svg>
);

const BlenderLogo = () => (
  <svg width="34" height="34" viewBox="0 0 34 34" style={{ flex: "none", marginLeft: 30 }}>
    <path d="M2 19l12-2-7-5h10l6-7 9 11c2 9-5 14-12 14-7 0-11-5-10-8z" fill="#e87d0d" stroke="#3a1c00" strokeWidth="1.2" strokeLinejoin="round" />
    <circle cx="20" cy="19" r="8" fill="#f2f2f2" />
    <circle cx="20" cy="19" r="5" fill="#2a5ea6" />
  </svg>
);

const Corner = ({ at }) => (
  <CornerMark $at={at} viewBox="0 0 25 25">
    <path d="M0 1l24 24M6 0l19 19M13 0l12 12" stroke="#2a2a2a" strokeWidth="2.6" />
    <path d="M1 0l24 24" stroke="#bbb" strokeWidth=".9" />
  </CornerMark>
);

const TickMark = () => (
  <Tick viewBox="0 0 26 24">
    <path d="M4 13l7 6L23 4" fill="none" stroke="#e8e8e8" strokeWidth="4" />
  </Tick>
);

const CheckItem = ({ label, on, pad = 5, h, mt }) => (
  <CheckRow $pad={pad} $on={on} $h={h} $mt={mt}>
    <Box>{on && <TickMark />}</Box>
    {label}
  </CheckRow>
);

const NumPair = ({ mt, x, y }) => (
  <FieldRow $mt={mt}>
    <NumCell $w={200} $lp={9} $rp={10}>
      <Nudge $dir="l" />X:
      <CellValue>{x}</CellValue>
      <Nudge $dir="r" />
    </NumCell>
    <NumCell $w={205} $lp={11} $rp={10} $split>
      <Nudge $dir="l" />Y:
      <CellValue>{y}</CellValue>
      <Nudge $dir="r" />
    </NumCell>
  </FieldRow>
);

const StackCells = ({ row }) =>
  row.length === 2 ? (
    <>
      <StackCell $w={104}>{row[0]}</StackCell>
      <StackCell $split>{row[1]}</StackCell>
    </>
  ) : (
    <StackCell>{row[0]}</StackCell>
  );

const PlainStack = ({ rows, mt }) => (
  <StackGroup $mt={mt}>
    {rows.map((row, i) => (
      <StackRow key={row.join()} $first={i === 0} $h={39.4}>
        <StackCells row={row} />
      </StackRow>
    ))}
  </StackGroup>
);

const TABS = [
  ["Tools", 83, true],
  ["Create", 102],
  ["Shading / UVs", 191],
  ["Options", 116],
  ["Grease Pencil", 181],
];

const ADD_ROWS = [
  ["Extrude Region"],
  ["Extrude Individual"],
  ["Inset Faces"],
  ["Make Edge/Face"],
  ["Subdivide"],
  ["Loop Cut and Sl..."],
  ["Offset Edge Slide"],
  ["Duplicate"],
  ["Spin", "Screw"],
  ["Knife", "Select"],
  ["Knife Project"],
  ["Bisect"],
];

const UVPanel = () => (
  <Panel $l={17} $r={16}>
    <PanelHead $mt={3} $indent={3} $gr={5}>
      <Tri $mr={10} />
      UV Vertex
      <Grip />
    </PanelHead>
    <NumPair mt={19} x="132.25" y="128.00" />
    <PanelRule $mt={16} $ml={-12} $mr={-4} />
    <PanelHead $mt={1} $indent={3} $gr={5}>
      <Tri $mr={10} />
      Display
      <Grip />
    </PanelHead>
    <Caption $mt={24} $pad={16}>Coordinates:</Caption>
    <CheckItem label="Normalized" h={28} mt={16} />
    <Caption $mt={23} $pad={16}>Cursor Location:</Caption>
    <NumPair mt={8} x="0.000" y="0.000" />
    <Caption $mt={28} $pad={16}>UVs:</Caption>
    <Radio $mt={9}>
      <RadioCell $on $first>Outline</RadioCell>
      <RadioCell>Dash</RadioCell>
      <RadioCell>Black</RadioCell>
      <RadioCell>White</RadioCell>
    </Radio>
    <CheckGrid>
      <CheckItem label="Draw Faces" on />
      <CheckItem label="Stretch" pad={6} />
      <CheckItem label="Smooth" />
      <ModeSwitch>
        <ModeCell $w={96} $on>Angle</ModeCell>
        <ModeCell $w={97}>Area</ModeCell>
      </ModeSwitch>
      <CheckItem label="Modified" />
    </CheckGrid>
    <PanelRule $mt={13} $ml={-12} $mr={-4} />
    <PanelHead $mt={1} $indent={3} $gr={5}>
      <Tri $mr={14} />
      <Box $mr={7}>
        <TickMark />
      </Box>
      Grease Pencil Layers
      <Grip />
    </PanelHead>
    <PencilRow $mt={19}>
      <PencilPick>
        <IconPencil />
        <Svg w={11} h={26} vb="0 0 14 30">
          <path d="M7 3L13 13H1z" fill="#b4b4b4" />
          <path d="M7 27L13 17H1z" fill="#b4b4b4" />
        </Svg>
      </PencilPick>
      <LightButton>
        <IconPlus />
        <ButtonLabel $rp={4}>New</ButtonLabel>
      </LightButton>
    </PencilRow>
    <PencilRow $mt={12}>
      <LightButton>
        <ButtonLabel $rp={14}>New Layer</ButtonLabel>
      </LightButton>
    </PencilRow>
    <Corner at="tr" />
  </Panel>
);

const ToolShelf = () => (
  <ToolRegion>
    <TabColumn>
      {TABS.map(([label, h, active]) => (
        <Tab key={label} $h={h} $active={active}>
          <TabText>{label}</TabText>
        </Tab>
      ))}
    </TabColumn>
    <ToolScroll>
      <PanelHead $indent={3} $gr={4}>
        <Tri $mr={10} />
        Transform
        <Grip />
      </PanelHead>
      <PlainStack
        mt={19}
        rows={[["Translate"], ["Rotate"], ["Scale"], ["Shrink/Fatten"], ["Push/Pull"]]}
      />
      <PanelRule $mt={12} $ml={-12} $mr={-12} />
      <PanelHead $mt={4} $indent={3} $gr={4}>
        <Tri $mr={10} />
        Mesh Tools
        <Grip />
      </PanelHead>
      <Caption $mt={25} $pad={16}>Deform:</Caption>
      <PlainStack mt={3} rows={[["Slide Ed", "Vertex"], ["Noise"], ["Smooth Vertex"], ["Randomize"]]} />
      <Caption $mt={17} $pad={16}>Add:</Caption>
      <StackGroup $mt={2}>
        <DarkRow $first>
          <DarkText>Extrude</DarkText>
          <UpDown />
        </DarkRow>
        {ADD_ROWS.map((row) => (
          <StackRow key={row.join()}>
            <StackCells row={row} />
          </StackRow>
        ))}
      </StackGroup>
    </ToolScroll>
    <Scrollbar>
      <Thumb />
    </Scrollbar>
  </ToolRegion>
);

const RedoPanel = () => (
  <Panel $l={16} $r={16}>
    <PanelRule $mt={0} $ml={-16} $mr={-16} />
    <PanelHead $mt={2} $indent={3} $gr={5}>
      <Tri $mr={10} />
      Sphere Projection
      <Grip />
    </PanelHead>
    <Caption $mt={25} $pad={16}>Direction</Caption>
    <StackGroup $mt={4}>
      <DarkRow $first $h={35}>
        <DarkText>View on Equator</DarkText>
        <UpDown />
      </DarkRow>
    </StackGroup>
    <Caption $mt={19} $pad={16}>Align</Caption>
    <StackGroup $mt={4}>
      <DarkRow $first $h={35}>
        <DarkText>Polar ZX</DarkText>
        <UpDown />
      </DarkRow>
    </StackGroup>
    <CheckItem label="Correct Aspect" pad={6} h={50} mt={7} />
    <CheckItem label="Clip to Bounds" pad={6} on h={50} />
    <CheckItem label="Scale to Bounds" pad={6} h={50} />
  </Panel>
);

const UVCanvas = () => (
  <Canvas viewBox="112 163 1018 1604">
    <defs>
      <pattern id="uvChecker" x="462" y="805" width="80" height="80" patternUnits="userSpaceOnUse">
        <rect width="80" height="80" fill="#464646" />
        <rect width="40" height="40" fill="#4c4c4c" />
        <rect x="40" y="40" width="40" height="40" fill="#4c4c4c" />
      </pattern>
      <clipPath id="uvClip">
        <rect x="460" y="810" width="324" height="310" />
      </clipPath>
    </defs>
    <rect x="462" y="805" width="318" height="318" fill="url(#uvChecker)" />
    <g clipPath="url(#uvClip)" shapeRendering="crispEdges">
      {uvFaces.map((points, i) => (
        <polygon key={i} points={points} fill="#ffa030" fillOpacity=".2" />
      ))}
      <path d={uvEdges} fill="none" stroke="#000" strokeWidth="5" />
      <path d={uvEdges} fill="none" stroke="#ff8a00" strokeWidth="2" />
      <path d={uvVerts} fill="#ff8a00" />
    </g>
    <g shapeRendering="crispEdges" strokeDasharray="3 3" stroke="#fff" strokeWidth="2">
      <path d="M420 1124h30M473 1124h39M461 1072v27M461 1136v38" fill="none" />
    </g>
    <path d="M461 1099l25 25-25 25-25-25z" fill="none" stroke="#fff" strokeWidth="2" />
    <path d="M449 1111l-13 13M473 1111l13 13M449 1137l12 12M473 1137l-12 12" fill="none" stroke="#d80000" strokeWidth="2" strokeDasharray="9 7" />
  </Canvas>
);

const SceneCanvas = () => (
  <Canvas viewBox="1895 163 1089 1604">
    <path d={gridPath} fill="none" stroke="#4b4b4b" strokeWidth="2" />
    <path d="M2154 683L2981 1499" fill="none" stroke="#7a2020" strokeWidth="2" />
    <path d="M1896 1080L2984 850" fill="none" stroke="#2a7a1f" strokeWidth="2" />
    {sphereFaces.map((f, i) => (
      <polygon key={i} points={f.points} fill={f.fill} stroke={f.fill} strokeWidth=".6" fillOpacity=".97" />
    ))}
    <path d={backEdges} fill="none" stroke="#ff9a10" strokeOpacity=".34" strokeWidth="1.6" />
    <path d={backVerts} fill="#ff9a10" fillOpacity=".38" />
    <path d={frontEdges} fill="none" stroke="#ff9d14" strokeWidth="1.9" />
    <path d={frontVerts} fill="#ff9a10" />
    <path d="M2439 934L2438 830" stroke="#0000d8" strokeWidth="3" />
    <path d="M2437 801l10 40h-20z" fill="#0000d8" />
    <path d="M2468 958L2550 941" stroke="#00d800" strokeWidth="3" />
    <path d="M2582 934l-32-8 2 20z" fill="#00d800" />
    <path d="M2452 976L2496 1024" stroke="#d80000" strokeWidth="2" />
    <path d="M2520 1044l-12-30c-6-4-14-4-17 3-3 6-3 11 0 15z" fill="#d80000" />
    <circle cx="2439" cy="964" r="30" fill="none" stroke="#fff" strokeWidth="2.4" />
    <circle cx="2439" cy="964" r="6" fill="#e8a050" stroke="#111" strokeWidth="2" />
    <circle cx="2952" cy="596" r="20" fill="none" stroke="#fff" strokeWidth="2" />
    <circle cx="2952" cy="596" r="20" fill="none" stroke="#d80000" strokeWidth="2" strokeDasharray="10 10" />
    <path d="M2952 560v24M2952 608v26M2916 596h24M2964 596h24" stroke="#111" strokeWidth="2" />
    <path d="M1947 1714L1945 1671" stroke="#0000c0" strokeWidth="3" />
    <path d="M1947 1714L1990 1706" stroke="#00c000" strokeWidth="4" />
    <path d="M1947 1714L1965 1735" stroke="#c00000" strokeWidth="2.5" />
  </Canvas>
);

const Menu = () => (
  <PopupMenu $x={74} $y={998} $bg="rgba(25,25,25,.93)">
    <MenuTitle>UV Mapping</MenuTitle>
    <MenuRule $mt={1} />
    <MenuRow><u>U</u>nwrap</MenuRow>
    <MenuRow><u>S</u>mart UV Project</MenuRow>
    <MenuRow><u>L</u>ightmap Pack</MenuRow>
    <MenuRow><u>F</u>ollow Active Quads</MenuRow>
    <MenuRule />
    <MenuRow><u>C</u>ube Projection</MenuRow>
    <MenuRow>Cylinder <u>P</u>rojection</MenuRow>
    <MenuRow $on>Sp<u>h</u>ere Projection</MenuRow>
    <MenuRule />
    <MenuRow>Project From <u>V</u>iew</MenuRow>
    <MenuRow>Project from View (Bounds)</MenuRow>
    <MenuRule />
    <MenuRow><u>R</u>eset</MenuRow>
  </PopupMenu>
);

const TopToolbar = () => (
  <TopBar>
    <Drop $w={59}>
      <IconInfo />
      <UpDown />
    </Drop>
    <MenuLink $ml={25} $w={77}>File</MenuLink>
    <MenuLink $w={115}>Render</MenuLink>
    <MenuLink $w={123}>Window</MenuLink>
    <MenuLink $w={74}>Help</MenuLink>
    <Seg>
      <SegCell $w={61} $tone="dark" $first>
        <IconLayout />
        <UpDown />
      </SegCell>
      <SegCell $w={240} $text={14} $first><SegText>UV Editing</SegText></SegCell>
      <SegCell $w={40}><IconPlus /></SegCell>
      <SegCell $w={40}><IconClose /></SegCell>
    </Seg>
    <Seg $ml={11}>
      <SegCell $w={60} $tone="dark" $first>
        <IconScene />
        <UpDown />
      </SegCell>
      <SegCell $w={241} $text={14} $first><SegText>Scene</SegText></SegCell>
      <SegCell $w={40}><IconPlus /></SegCell>
      <SegCell $w={40}><IconClose /></SegCell>
    </Seg>
    <Drop $w={233} $ml={33} $text={10} $tone="menu">
      <DropText>Blender Render</DropText>
      <UpDown />
    </Drop>
    <BlenderLogo />
    <Info>v2.78 | Verts:672/672 | Edges:1,312/1,312 | Faces:640/640 | Tris:1,280 | Mem:70.37M | Sphere</Info>
    <Corner at="tr" />
    <Corner at="bl" />
  </TopBar>
);

const UVToolbar = () => (
  <BottomBar $pad={17}>
    <Drop $w={60}>
      <IconEditor />
      <UpDown />
    </Drop>
    <MenuLink $ml={26} $w={91}>View</MenuLink>
    <MenuLink $w={105}>Select</MenuLink>
    <MenuLink $w={105}>Image</MenuLink>
    <MenuLink $w={69}>UVs</MenuLink>
    <Seg>
      <SegCell $w={60} $tone="dark" $first>
        <IconImage />
        <UpDown />
      </SegCell>
      <SegCell $w={120} $gap={20} $text={8} $first>
        <IconPlus />
        <SegText>New</SegText>
      </SegCell>
      <SegCell $w={120} $gap={6} $text={6}>
        <IconFolder />
        <SegText>Open</SegText>
      </SegCell>
    </Seg>
    <Seg $ml={12}>
      <SegCell $w={34} $first><IconPin /></SegCell>
    </Seg>
    <Drop $w={134} $ml={12} $text={8}>
      <IconImage />
      <DropText $ml={8}>View</DropText>
      <UpDown />
    </Drop>
    <Drop $w={70} $ml={9}>
      <IconPivot />
      <UpDown />
    </Drop>
    <Seg $ml={12}>
      <SegCell $w={34} $first><IconCursorSel /></SegCell>
    </Seg>
    <Seg $ml={11}>
      <SegCell $w={39} $tone="blue" $first><IconUvMode kind="vert" /></SegCell>
      <SegCell $w={39} $tone="dark"><IconUvMode kind="edge" /></SegCell>
      <SegCell $w={39} $tone="dark"><IconUvMode kind="face" /></SegCell>
      <SegCell $w={38} $tone="dark"><IconUvMode kind="island" /></SegCell>
    </Seg>
    <Drop $w={69} $ml={12}>
      <IconSticky />
      <UpDown />
    </Drop>
    <Drop $w={69} $ml={10}>
      <IconProp />
      <UpDown />
    </Drop>
    <Seg $ml={12}>
      <SegCell $w={34} $first><IconPartial /></SegCell>
    </Seg>
    <Corner at="br" />
  </BottomBar>
);

const SceneToolbar = () => (
  <BottomBar $pad={18}>
    <Drop $w={58}>
      <IconMeshCube />
      <UpDown />
    </Drop>
    <MenuLink $ml={27} $w={90}>View</MenuLink>
    <MenuLink $w={105}>Select</MenuLink>
    <MenuLink $w={81}>Add</MenuLink>
    <MenuLink $w={82}>Mesh</MenuLink>
    <Drop $w={202} $text={8}>
      <IconEditMode />
      <DropText $ml={10}>Edit Mode</DropText>
      <UpDown />
    </Drop>
    <Drop $w={68} $ml={12}>
      <IconShading />
      <UpDown />
    </Drop>
    <Drop $w={68} $ml={12}>
      <IconPivotMedian />
      <UpDown />
    </Drop>
    <Seg $ml={12}>
      <SegCell $w={35} $tone="dark" $first><IconManip /></SegCell>
      <SegCell $w={40} $tone="blue"><IconTranslate /></SegCell>
      <SegCell $w={41} $tone="dark"><IconRotate /></SegCell>
      <SegCell $w={40} $tone="dark"><IconScale /></SegCell>
      <SegCell $w={146} $tone="dark" $text={14} $gap={0}>
        <SegText $grow>Global</SegText>
        <UpDown />
      </SegCell>
    </Seg>
    <Seg $ml={11}>
      <SegCell $w={38} $first><IconCube kind="vert" /></SegCell>
      <SegCell $w={38}><IconCube kind="edge" /></SegCell>
      <SegCell $w={38}><IconCube kind="face" /></SegCell>
    </Seg>
    <Seg $ml={13}>
      <SegCell $w={34} $first><IconOcclude /></SegCell>
    </Seg>
    <Drop $w={68} $ml={12}>
      <IconProp />
      <UpDown />
    </Drop>
    <Corner at="bl" />
    <Corner at="br" />
  </BottomBar>
);

export default function App() {
  return (
    <Page>
      <GlobalStyle />
      <Window>
        <TitleBar>
          <Lights>
            <Light $c="#fc5b57" $b="#e0443f">
              <LightDot />
            </Light>
            <Light $c="#febb2e" $b="#e09e1a" />
            <Light $c="#28c83f" $b="#1aab2b" />
          </Lights>
          Blender
        </TitleBar>
        <TopToolbar />
        <Main>
          <Side $w={1459}>
            <Views>
              <Viewport $bg="#333">
                <UVCanvas />
                <AddTab>✚</AddTab>
              </Viewport>
              <Side $w={441}>
                <UVPanel />
              </Side>
            </Views>
            <UVToolbar />
          </Side>
          <VDivider />
          <Side $w={1410}>
            <Views>
              <ToolBox>
                <ToolShelf />
                <RedoPanel />
              </ToolBox>
              <Viewport $bg="#393939">
                <SceneCanvas />
                <ViewLabel $x={40} $y={20}>User Persp</ViewLabel>
                <AddTab $right>✚</AddTab>
                <Corner at="tr" />
                <AxisLabel $x={50} $y={1488} $c="#1a1ab8">z</AxisLabel>
                <AxisLabel $x={98} $y={1522} $c="#18a018">y</AxisLabel>
                <AxisLabel $x={74} $y={1552} $c="#b81a1a">x</AxisLabel>
                <ViewLabel $x={91} $y={1562}>(1) Sphere</ViewLabel>
                <Menu />
                <TipBox $x={247} $y={1367} $bg="rgba(25,25,25,.97)">
                  <TipLine>Project the UV vertices of the mesh over the curved surface of a sphere</TipLine>
                  <TipCode>Python: bpy.ops.uv.sphere_project()</TipCode>
                </TipBox>
              </Viewport>
            </Views>
            <SceneToolbar />
          </Side>
        </Main>
      </Window>
    </Page>
  );
}
